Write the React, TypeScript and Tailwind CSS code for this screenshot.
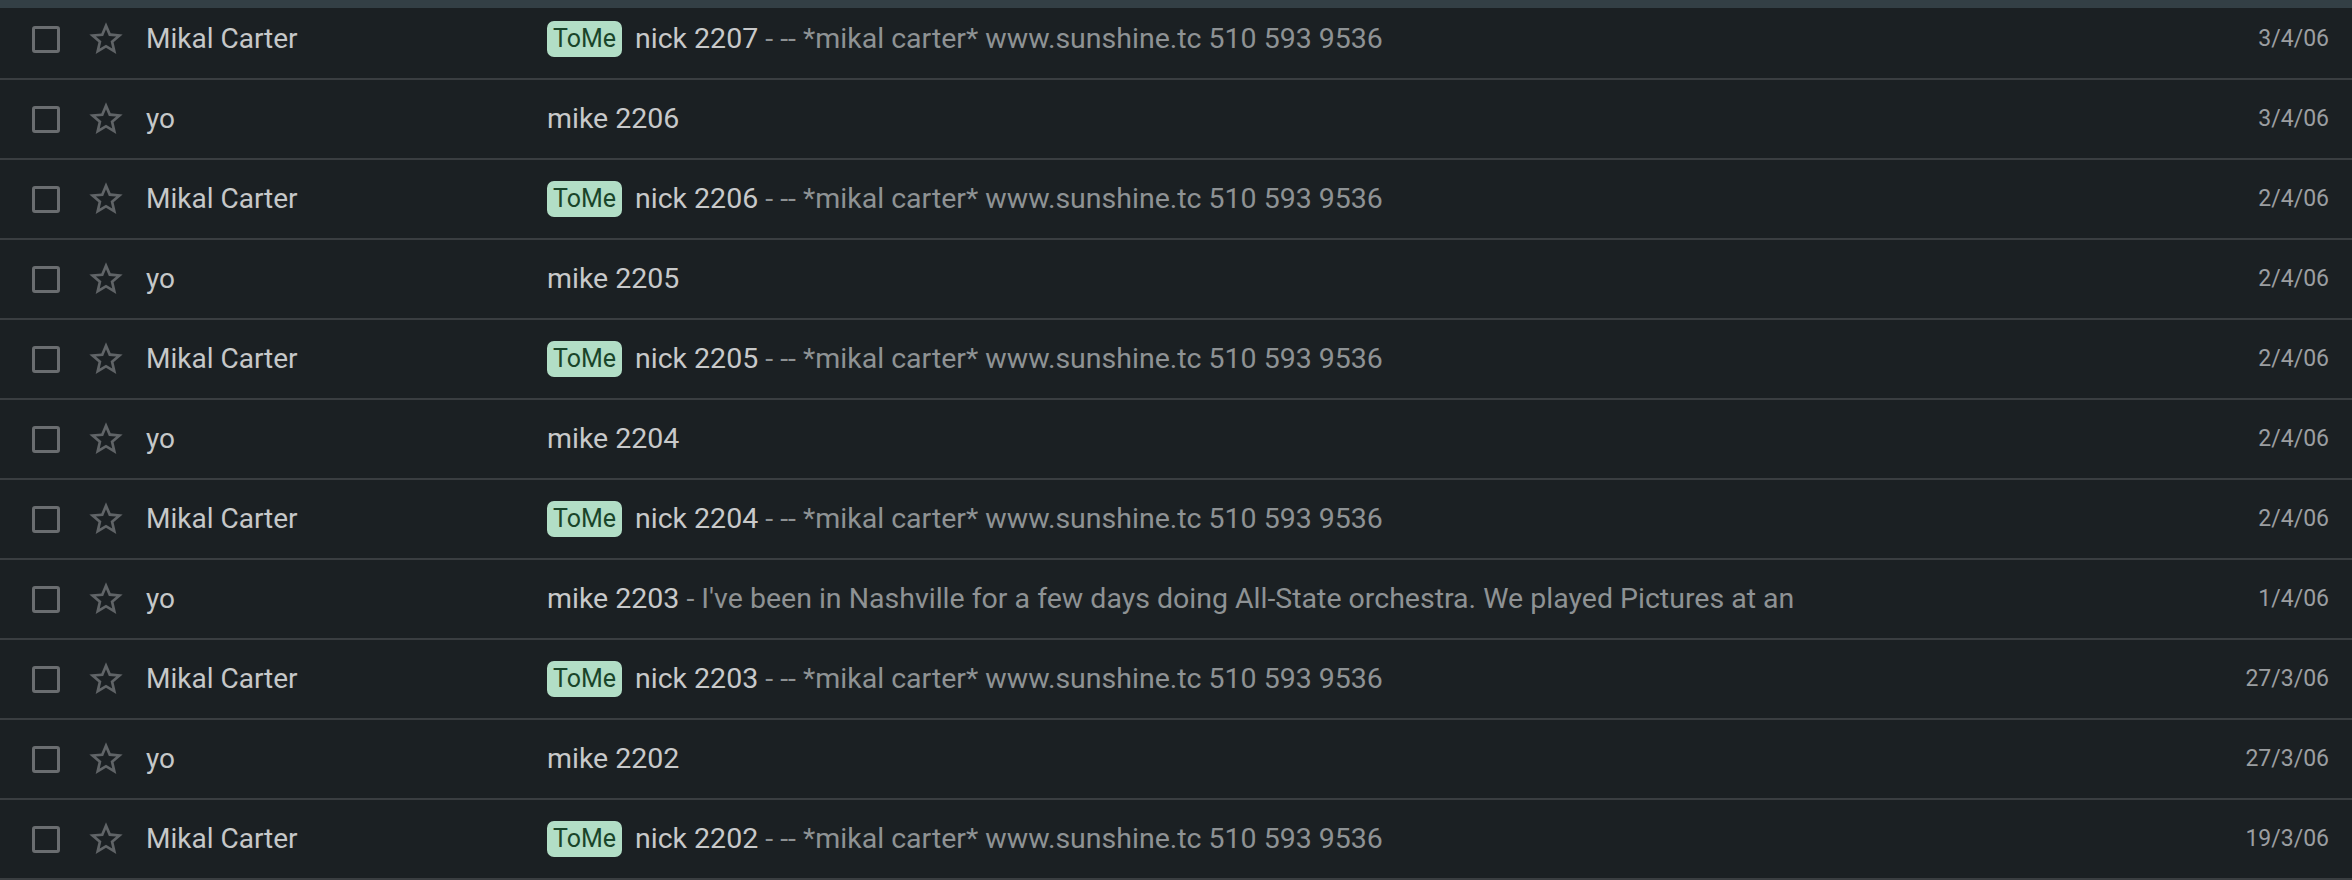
import React from "react";

type Row = { sender: string; tag?: boolean; subject: string; snippet?: string; date: string };

const SNIP = " - -- *mikal carter* www.sunshine.tc 510 593 9536";

const rows: Row[] = [
  { sender: "Mikal Carter", tag: true, subject: "nick 2207", snippet: SNIP, date: "3/4/06" },
  { sender: "yo", subject: "mike 2206", date: "3/4/06" },
  { sender: "Mikal Carter", tag: true, subject: "nick 2206", snippet: SNIP, date: "2/4/06" },
  { sender: "yo", subject: "mike 2205", date: "2/4/06" },
  { sender: "Mikal Carter", tag: true, subject: "nick 2205", snippet: SNIP, date: "2/4/06" },
  { sender: "yo", subject: "mike 2204", date: "2/4/06" },
  { sender: "Mikal Carter", tag: true, subject: "nick 2204", snippet: SNIP, date: "2/4/06" },
  {
    sender: "yo",
    subject: "mike 2203",
    snippet: " - I've been in Nashville for a few days doing All-State orchestra. We played Pictures at an",
    date: "1/4/06",
  },
  { sender: "Mikal Carter", tag: true, subject: "nick 2203", snippet: SNIP, date: "27/3/06" },
  { sender: "yo", subject: "mike 2202", date: "27/3/06" },
  { sender: "Mikal Carter", tag: true, subject: "nick 2202", snippet: SNIP, date: "19/3/06" },
];

function Star() {
  return (
    <svg width="40" height="40" viewBox="0 0 24 24" className="shrink-0" fill="#606467">
      <path d="M22 9.24l-7.19-.62L12 2 9.19 8.63 2 9.24l5.46 4.73L5.82 21 12 17.27 18.18 21l-1.63-7.03L22 9.24zM12 15.4l-3.76 2.27 1-4.28-3.32-2.88 4.38-.38L12 6.1l1.71 4.04 4.38.38-3.32 2.88 1 4.28L12 15.4z" />
    </svg>
  );
}

export default function App() {
  return (
    <div
      className="relative w-[2352px] h-[880px] overflow-hidden bg-[#1b2023]"
      style={{ fontFamily: "Roboto, 'Noto Sans', sans-serif" }}
    >
      <div className="flex flex-col">
        {rows.map((r, i) => (
          <div
            key={i}
            className="flex items-center h-[80px] border-b-2 border-[#3a3e41] pl-[32px] pr-[23px]"
          >
            <div className="w-[28px] h-[27px] shrink-0 rounded-[3px] border-[3px] border-[#6a6d70]" />
            <div className="ml-[26px] flex items-center">
              <Star />
            </div>
            <div className="ml-[20px] w-[401px] shrink-0 text-[28px] text-[#c6c8c9] whitespace-nowrap">
              {r.sender}
            </div>
            <div className="flex-1 flex items-center min-w-0 whitespace-nowrap overflow-hidden">
              {r.tag && (
                <span className="mr-[13px] h-[36px] w-[75px] shrink-0 rounded-[7px] bg-[#b2dec6] text-[#1a452a] text-[25px] flex items-center justify-center">
                  ToMe
                </span>
              )}
              <span className="text-[28.5px] text-[#c8c9ca]">{r.subject}</span>
              {r.snippet && <span className="text-[28.5px] text-[#8e9294] whitespace-pre">{r.snippet}</span>}
            </div>
            <div className="text-[23px] text-[#9b9ea1] shrink-0">{r.date}</div>
          </div>
        ))}
      </div>
      <div className="absolute top-0 left-0 right-0 h-[8px] bg-[#333f45]" />
    </div>
  );
}
